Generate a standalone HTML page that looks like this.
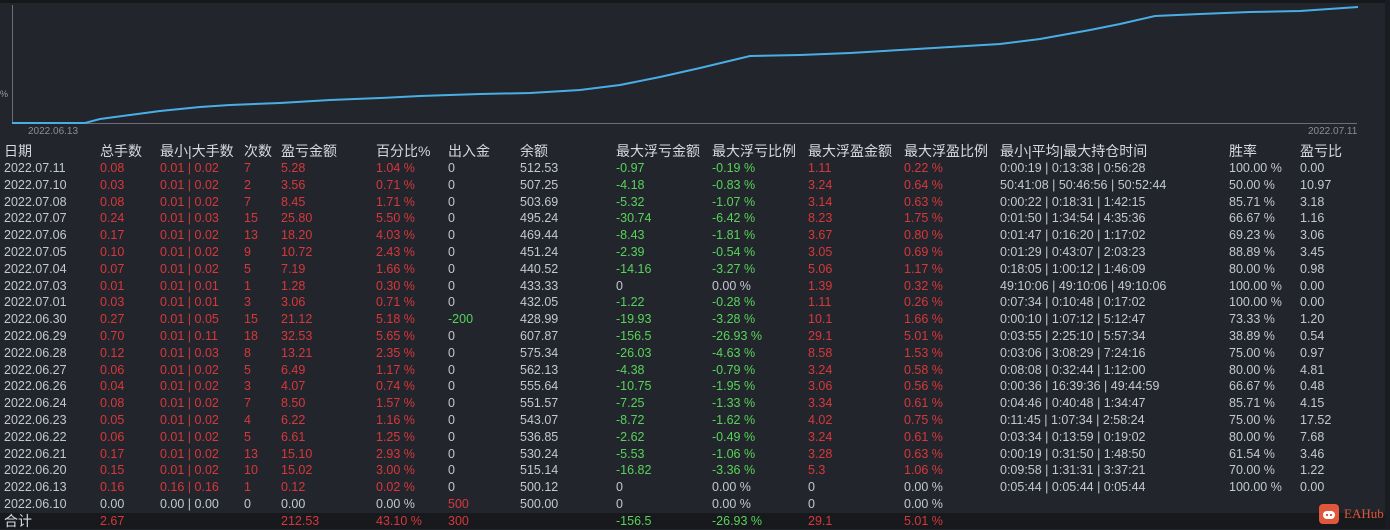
<!DOCTYPE html>
<html><head><meta charset="utf-8"><style>
body{margin:0;width:1390px;height:529px;background:#22252c;overflow:hidden;font-family:"Liberation Sans","Noto Sans CJK SC",sans-serif;position:relative}
.top{position:absolute;left:0;top:0;width:1390px;height:3px;background:#15171b}
.rb{position:absolute;right:0;top:0;width:5px;height:529px;background:#1a1c21}
.r{position:absolute;left:0;height:17px;line-height:17px;font-size:12.5px;color:#c3c8d1;white-space:nowrap;display:flex}
.r span{display:block;flex:none}
.h{font-size:14px;color:#d6dae0}
.c0{width:100px;padding-left:4px;box-sizing:border-box}
.c1{width:60px}.c2{width:84px}.c3{width:37px}.c4{width:95px}.c5{width:72px}.c6{width:72px}.c7{width:96px}.c8{width:96px}.c9{width:96px}.c10{width:96px}.c11{width:96px}.c12{width:229px}.c13{width:71px}
.c0{margin-left:0}
.R{color:#d8383a}.G{color:#58d35a}
.tot{background:#17191d}
</style></head><body>
<div class="top"></div>
<svg style="position:absolute;left:0;top:0" width="1390" height="140">
<line x1="12.5" y1="5" x2="12.5" y2="124" stroke="#6a6e76" stroke-width="1"/>
<line x1="12" y1="123.5" x2="1357" y2="123.5" stroke="#6a6e76" stroke-width="1"/>
<polyline fill="none" stroke="#4aaee6" stroke-width="2" points="12,123 85,123 100,119 130,115 160,111 200,107 230,105 280,103 330,100 380,98 420,96 480,94 530,93 580,90 620,85 660,77 700,68 750,56 800,55 850,53 900,50 950,47 1000,44 1040,39 1090,30 1120,24 1155,16 1200,14 1250,12 1300,11 1358,7"/>
<text x="28" y="134" fill="#8a8e96" font-size="10" font-family="Liberation Sans">2022.06.13</text>
<text x="1308" y="134" fill="#8a8e96" font-size="10" font-family="Liberation Sans">2022.07.11</text>
<text x="0" y="97" fill="#9a9ea6" font-size="9">%</text>
</svg>
<div class="rb"></div>

<div class="r h" style="top:143px"><span class="c0">日期</span><span class="c1">总手数</span><span class="c2">最小|大手数</span><span class="c3">次数</span><span class="c4">盈亏金额</span><span class="c5">百分比%</span><span class="c6">出入金</span><span class="c7">余额</span><span class="c8">最大浮亏金额</span><span class="c9">最大浮亏比例</span><span class="c10">最大浮盈金额</span><span class="c11">最大浮盈比例</span><span class="c12">最小|平均|最大持仓时间</span><span class="c13">胜率</span><span>盈亏比</span></div>

<div class="r" style="top:160px"><span class="c0">2022.07.11</span><span class="c1 R">0.08</span><span class="c2 R">0.01 | 0.02</span><span class="c3 R">7</span><span class="c4 R">5.28</span><span class="c5 R">1.04 %</span><span class="c6">0</span><span class="c7">512.53</span><span class="c8 G">-0.97</span><span class="c9 G">-0.19 %</span><span class="c10 R">1.11</span><span class="c11 R">0.22 %</span><span class="c12">0:00:19 | 0:13:38 | 0:56:28</span><span class="c13">100.00 %</span><span>0.00</span></div>
<div class="r" style="top:176.8px"><span class="c0">2022.07.10</span><span class="c1 R">0.03</span><span class="c2 R">0.01 | 0.02</span><span class="c3 R">2</span><span class="c4 R">3.56</span><span class="c5 R">0.71 %</span><span class="c6">0</span><span class="c7">507.25</span><span class="c8 G">-4.18</span><span class="c9 G">-0.83 %</span><span class="c10 R">3.24</span><span class="c11 R">0.64 %</span><span class="c12">50:41:08 | 50:46:56 | 50:52:44</span><span class="c13">50.00 %</span><span>10.97</span></div>
<div class="r" style="top:193.6px"><span class="c0">2022.07.08</span><span class="c1 R">0.08</span><span class="c2 R">0.01 | 0.02</span><span class="c3 R">7</span><span class="c4 R">8.45</span><span class="c5 R">1.71 %</span><span class="c6">0</span><span class="c7">503.69</span><span class="c8 G">-5.32</span><span class="c9 G">-1.07 %</span><span class="c10 R">3.14</span><span class="c11 R">0.63 %</span><span class="c12">0:00:22 | 0:18:31 | 1:42:15</span><span class="c13">85.71 %</span><span>3.18</span></div>
<div class="r" style="top:210.4px"><span class="c0">2022.07.07</span><span class="c1 R">0.24</span><span class="c2 R">0.01 | 0.03</span><span class="c3 R">15</span><span class="c4 R">25.80</span><span class="c5 R">5.50 %</span><span class="c6">0</span><span class="c7">495.24</span><span class="c8 G">-30.74</span><span class="c9 G">-6.42 %</span><span class="c10 R">8.23</span><span class="c11 R">1.75 %</span><span class="c12">0:01:50 | 1:34:54 | 4:35:36</span><span class="c13">66.67 %</span><span>1.16</span></div>
<div class="r" style="top:227.2px"><span class="c0">2022.07.06</span><span class="c1 R">0.17</span><span class="c2 R">0.01 | 0.02</span><span class="c3 R">13</span><span class="c4 R">18.20</span><span class="c5 R">4.03 %</span><span class="c6">0</span><span class="c7">469.44</span><span class="c8 G">-8.43</span><span class="c9 G">-1.81 %</span><span class="c10 R">3.67</span><span class="c11 R">0.80 %</span><span class="c12">0:01:47 | 0:16:20 | 1:17:02</span><span class="c13">69.23 %</span><span>3.06</span></div>
<div class="r" style="top:244px"><span class="c0">2022.07.05</span><span class="c1 R">0.10</span><span class="c2 R">0.01 | 0.02</span><span class="c3 R">9</span><span class="c4 R">10.72</span><span class="c5 R">2.43 %</span><span class="c6">0</span><span class="c7">451.24</span><span class="c8 G">-2.39</span><span class="c9 G">-0.54 %</span><span class="c10 R">3.05</span><span class="c11 R">0.69 %</span><span class="c12">0:01:29 | 0:43:07 | 2:03:23</span><span class="c13">88.89 %</span><span>3.45</span></div>
<div class="r" style="top:260.8px"><span class="c0">2022.07.04</span><span class="c1 R">0.07</span><span class="c2 R">0.01 | 0.02</span><span class="c3 R">5</span><span class="c4 R">7.19</span><span class="c5 R">1.66 %</span><span class="c6">0</span><span class="c7">440.52</span><span class="c8 G">-14.16</span><span class="c9 G">-3.27 %</span><span class="c10 R">5.06</span><span class="c11 R">1.17 %</span><span class="c12">0:18:05 | 1:00:12 | 1:46:09</span><span class="c13">80.00 %</span><span>0.98</span></div>
<div class="r" style="top:277.6px"><span class="c0">2022.07.03</span><span class="c1 R">0.01</span><span class="c2 R">0.01 | 0.01</span><span class="c3 R">1</span><span class="c4 R">1.28</span><span class="c5 R">0.30 %</span><span class="c6">0</span><span class="c7">433.33</span><span class="c8">0</span><span class="c9">0.00 %</span><span class="c10 R">1.39</span><span class="c11 R">0.32 %</span><span class="c12">49:10:06 | 49:10:06 | 49:10:06</span><span class="c13">100.00 %</span><span>0.00</span></div>
<div class="r" style="top:294.4px"><span class="c0">2022.07.01</span><span class="c1 R">0.03</span><span class="c2 R">0.01 | 0.01</span><span class="c3 R">3</span><span class="c4 R">3.06</span><span class="c5 R">0.71 %</span><span class="c6">0</span><span class="c7">432.05</span><span class="c8 G">-1.22</span><span class="c9 G">-0.28 %</span><span class="c10 R">1.11</span><span class="c11 R">0.26 %</span><span class="c12">0:07:34 | 0:10:48 | 0:17:02</span><span class="c13">100.00 %</span><span>0.00</span></div>
<div class="r" style="top:311.2px"><span class="c0">2022.06.30</span><span class="c1 R">0.27</span><span class="c2 R">0.01 | 0.05</span><span class="c3 R">15</span><span class="c4 R">21.12</span><span class="c5 R">5.18 %</span><span class="c6 G">-200</span><span class="c7">428.99</span><span class="c8 G">-19.93</span><span class="c9 G">-3.28 %</span><span class="c10 R">10.1</span><span class="c11 R">1.66 %</span><span class="c12">0:00:10 | 1:07:12 | 5:12:47</span><span class="c13">73.33 %</span><span>1.20</span></div>
<div class="r" style="top:328px"><span class="c0">2022.06.29</span><span class="c1 R">0.70</span><span class="c2 R">0.01 | 0.11</span><span class="c3 R">18</span><span class="c4 R">32.53</span><span class="c5 R">5.65 %</span><span class="c6">0</span><span class="c7">607.87</span><span class="c8 G">-156.5</span><span class="c9 G">-26.93 %</span><span class="c10 R">29.1</span><span class="c11 R">5.01 %</span><span class="c12">0:03:55 | 2:25:10 | 5:57:34</span><span class="c13">38.89 %</span><span>0.54</span></div>
<div class="r" style="top:344.8px"><span class="c0">2022.06.28</span><span class="c1 R">0.12</span><span class="c2 R">0.01 | 0.03</span><span class="c3 R">8</span><span class="c4 R">13.21</span><span class="c5 R">2.35 %</span><span class="c6">0</span><span class="c7">575.34</span><span class="c8 G">-26.03</span><span class="c9 G">-4.63 %</span><span class="c10 R">8.58</span><span class="c11 R">1.53 %</span><span class="c12">0:03:06 | 3:08:29 | 7:24:16</span><span class="c13">75.00 %</span><span>0.97</span></div>
<div class="r" style="top:361.6px"><span class="c0">2022.06.27</span><span class="c1 R">0.06</span><span class="c2 R">0.01 | 0.02</span><span class="c3 R">5</span><span class="c4 R">6.49</span><span class="c5 R">1.17 %</span><span class="c6">0</span><span class="c7">562.13</span><span class="c8 G">-4.38</span><span class="c9 G">-0.79 %</span><span class="c10 R">3.24</span><span class="c11 R">0.58 %</span><span class="c12">0:08:08 | 0:32:44 | 1:12:00</span><span class="c13">80.00 %</span><span>4.81</span></div>
<div class="r" style="top:378.4px"><span class="c0">2022.06.26</span><span class="c1 R">0.04</span><span class="c2 R">0.01 | 0.02</span><span class="c3 R">3</span><span class="c4 R">4.07</span><span class="c5 R">0.74 %</span><span class="c6">0</span><span class="c7">555.64</span><span class="c8 G">-10.75</span><span class="c9 G">-1.95 %</span><span class="c10 R">3.06</span><span class="c11 R">0.56 %</span><span class="c12">0:00:36 | 16:39:36 | 49:44:59</span><span class="c13">66.67 %</span><span>0.48</span></div>
<div class="r" style="top:395.2px"><span class="c0">2022.06.24</span><span class="c1 R">0.08</span><span class="c2 R">0.01 | 0.02</span><span class="c3 R">7</span><span class="c4 R">8.50</span><span class="c5 R">1.57 %</span><span class="c6">0</span><span class="c7">551.57</span><span class="c8 G">-7.25</span><span class="c9 G">-1.33 %</span><span class="c10 R">3.34</span><span class="c11 R">0.61 %</span><span class="c12">0:04:46 | 0:40:48 | 1:34:47</span><span class="c13">85.71 %</span><span>4.15</span></div>
<div class="r" style="top:412px"><span class="c0">2022.06.23</span><span class="c1 R">0.05</span><span class="c2 R">0.01 | 0.02</span><span class="c3 R">4</span><span class="c4 R">6.22</span><span class="c5 R">1.16 %</span><span class="c6">0</span><span class="c7">543.07</span><span class="c8 G">-8.72</span><span class="c9 G">-1.62 %</span><span class="c10 R">4.02</span><span class="c11 R">0.75 %</span><span class="c12">0:11:45 | 1:07:34 | 2:58:24</span><span class="c13">75.00 %</span><span>17.52</span></div>
<div class="r" style="top:428.8px"><span class="c0">2022.06.22</span><span class="c1 R">0.06</span><span class="c2 R">0.01 | 0.02</span><span class="c3 R">5</span><span class="c4 R">6.61</span><span class="c5 R">1.25 %</span><span class="c6">0</span><span class="c7">536.85</span><span class="c8 G">-2.62</span><span class="c9 G">-0.49 %</span><span class="c10 R">3.24</span><span class="c11 R">0.61 %</span><span class="c12">0:03:34 | 0:13:59 | 0:19:02</span><span class="c13">80.00 %</span><span>7.68</span></div>
<div class="r" style="top:445.6px"><span class="c0">2022.06.21</span><span class="c1 R">0.17</span><span class="c2 R">0.01 | 0.02</span><span class="c3 R">13</span><span class="c4 R">15.10</span><span class="c5 R">2.93 %</span><span class="c6">0</span><span class="c7">530.24</span><span class="c8 G">-5.53</span><span class="c9 G">-1.06 %</span><span class="c10 R">3.28</span><span class="c11 R">0.63 %</span><span class="c12">0:00:19 | 0:31:50 | 1:48:50</span><span class="c13">61.54 %</span><span>3.46</span></div>
<div class="r" style="top:462.4px"><span class="c0">2022.06.20</span><span class="c1 R">0.15</span><span class="c2 R">0.01 | 0.02</span><span class="c3 R">10</span><span class="c4 R">15.02</span><span class="c5 R">3.00 %</span><span class="c6">0</span><span class="c7">515.14</span><span class="c8 G">-16.82</span><span class="c9 G">-3.36 %</span><span class="c10 R">5.3</span><span class="c11 R">1.06 %</span><span class="c12">0:09:58 | 1:31:31 | 3:37:21</span><span class="c13">70.00 %</span><span>1.22</span></div>
<div class="r" style="top:479.2px"><span class="c0">2022.06.13</span><span class="c1 R">0.16</span><span class="c2 R">0.16 | 0.16</span><span class="c3 R">1</span><span class="c4 R">0.12</span><span class="c5 R">0.02 %</span><span class="c6">0</span><span class="c7">500.12</span><span class="c8">0</span><span class="c9">0.00 %</span><span class="c10">0</span><span class="c11">0.00 %</span><span class="c12">0:05:44 | 0:05:44 | 0:05:44</span><span class="c13">100.00 %</span><span>0.00</span></div>
<div class="r" style="top:496px"><span class="c0">2022.06.10</span><span class="c1">0.00</span><span class="c2">0.00 | 0.00</span><span class="c3">0</span><span class="c4">0.00</span><span class="c5">0.00 %</span><span class="c6 R">500</span><span class="c7">500.00</span><span class="c8">0</span><span class="c9">0.00 %</span><span class="c10">0</span><span class="c11">0.00 %</span></div>
<div style="position:absolute;left:0;top:513px;width:1385px;height:16px;background:#17191d"></div>
<div class="r" style="top:513px"><span class="c0 h" style="font-size:14px">合计</span><span class="c1 R">2.67</span><span class="c2"></span><span class="c3"></span><span class="c4 R">212.53</span><span class="c5 R">43.10 %</span><span class="c6 R">300</span><span class="c7"></span><span class="c8 G">-156.5</span><span class="c9 G">-26.93 %</span><span class="c10 R">29.1</span><span class="c11 R">5.01 %</span></div>
<div style="position:absolute;left:1319px;top:504px;width:20px;height:20px;background:#e0573b;border-radius:4px"><div style="position:absolute;left:4px;top:7px;width:12px;height:8px;background:#fff;border-radius:4px"></div><div style="position:absolute;left:7px;top:10px;width:2px;height:2px;background:#e0573b"></div><div style="position:absolute;left:11px;top:10px;width:2px;height:2px;background:#e0573b"></div></div>
<div style="position:absolute;left:1344px;top:506px;font-family:'Liberation Serif',serif;font-size:13px;color:#e0573b">EAHub</div>
</body></html>
